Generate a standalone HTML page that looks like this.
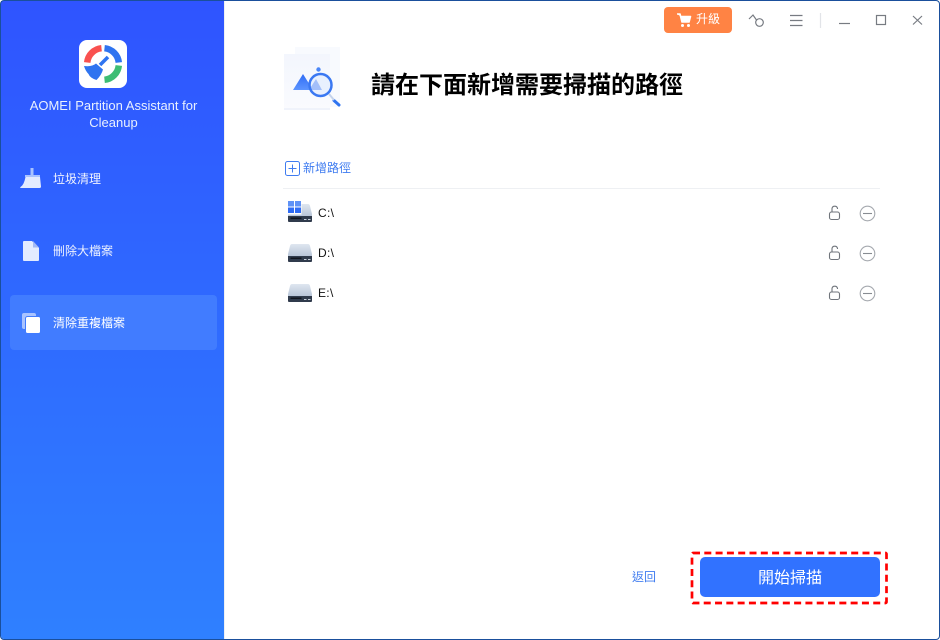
<!DOCTYPE html>
<html><head><meta charset="utf-8">
<style>
html,body{margin:0;padding:0;background:#fff}
body{width:940px;height:640px;position:relative;overflow:hidden;font-family:"Liberation Sans","Noto Sans CJK TC",sans-serif}
.a{position:absolute;white-space:nowrap}
#side{position:absolute;left:1px;top:1px;width:223px;height:638px;background:linear-gradient(180deg,#2f54ff 0%,#2f80ff 100%);border-bottom-left-radius:3px}
#fr{position:absolute;left:0;top:0;width:940px;height:640px;box-sizing:border-box;border:1px solid #1a4f9c;border-radius:4px;z-index:5;pointer-events:none}
.nav{color:#fff;font-size:12px;line-height:16px;opacity:.92}
</style></head><body>
<div id="side"></div>
<div class="a" style="left:224px;top:1px;width:1px;height:638px;background:#eef0f3"></div>
<div id="fr"></div>

<svg class="a" style="left:79px;top:40px" width="48" height="48" viewBox="79 40 48 48">
<rect x="79" y="40" width="48" height="48" rx="8" fill="#fff"/>
<g fill="none" stroke-width="6.5">
<path d="M87.200 62.500A16 16 0 0 1 101.500 48.200" stroke="#f9514f"/>
<path d="M104.500 48.200A16 16 0 0 1 118.800 62.500" stroke="#2f74f0"/>
<path d="M118.800 65.500A16 16 0 0 1 104.500 79.800" stroke="#3dbd74"/>
</g>
<path d="M100 65L108 57" stroke="#2f74f0" stroke-width="3.500" fill="none"/>
<path d="M84 66Q92 67 96 63.500L103 69.500Q101.500 75 96.500 80Q90 78 88.500 74Q85.500 71 84 66Z" fill="#2f74f0"/>
</svg>
<div class="a" style="left:2px;top:97px;width:223px;text-align:center;color:#e8f0ff;font-size:13px;line-height:17px;white-space:normal">AOMEI Partition Assistant for<br>Cleanup</div>

<svg class="a" style="left:20px;top:167px" width="22" height="22" viewBox="0 0 22 22">
<rect x="10.500" y="1" width="3" height="7" fill="#a9c3ff"/>
<rect x="5" y="8" width="15" height="2" fill="#a9c3ff"/>
<path d="M5.500 10H20L21 19.500Q21 21 19.500 21H1Q-.5 21 .5 20Q4 18 5.500 10Z" fill="#e3ebff"/>
</svg>
<div class="a nav" style="left:53px;top:171px">垃圾清理</div>

<svg class="a" style="left:22px;top:240px" width="18" height="22" viewBox="0 0 18 22">
<path d="M2 1H10L17 8V20Q17 21 16 21H2Q1 21 1 20V2Q1 1 2 1Z" fill="#e3ebff"/>
<path d="M11 1L17 7.500H11Z" fill="#a3b9f5"/>
</svg>
<div class="a nav" style="left:53px;top:243px">刪除大檔案</div>

<div class="a" style="left:10px;top:295px;width:207px;height:55px;background:#417cff;border-radius:4px"></div>
<svg class="a" style="left:21px;top:312px" width="22" height="22" viewBox="0 0 22 22">
<rect x="1" y="1" width="14" height="16" rx="2" fill="#a9c3ff"/>
<rect x="4.500" y="4.500" width="15" height="17" rx="2" fill="#fff" stroke="#417cff" stroke-width="1"/>
</svg>
<div class="a nav" style="left:53px;top:315px;opacity:1">清除重複檔案</div>

<div class="a" style="left:664px;top:7px;width:68px;height:26px;background:#ff8344;border-radius:4px"></div>
<svg class="a" style="left:676px;top:12px" width="16" height="16" viewBox="0 0 16 16">
<path d="M1 2H4L6 10H13L14.500 4.500H5" fill="#fff" stroke="#fff" stroke-width="1.600" stroke-linejoin="round"/>
<circle cx="6.500" cy="13.500" r="1.500" fill="#fff"/><circle cx="12.500" cy="13.500" r="1.500" fill="#fff"/>
</svg>
<div class="a" style="left:696px;top:12px;color:#fff;font-size:12px;line-height:15px">升級</div>

<svg class="a" style="left:745px;top:8px" width="185" height="24" viewBox="745 8 185 24" fill="none" stroke="#777b82" stroke-width="1.200">
<circle cx="759.500" cy="22.500" r="3.800"/>
<path d="M749 19L753 15L756.500 20"/>
<path d="M790 15.500H802.500M790 20.500H802.500M790 25.500H802.500"/>
<path d="M820.500 13V28" stroke="#e2e4e8"/>
<path d="M839 23.500H850"/>
<rect x="876.500" y="15.500" width="9" height="9"/>
<path d="M913 16L922 24.500M922 16L913 24.500"/>
</svg>

<svg class="a" style="left:280px;top:44px" width="66" height="70" viewBox="280 44 66 70">
<defs>
<linearGradient id="p" x1="0" y1="0" x2="0" y2="1"><stop offset="0" stop-color="#f3f6fd"/><stop offset="1" stop-color="#fafbfe"/></linearGradient>
<linearGradient id="m" x1="0" y1="0" x2="0" y2="1"><stop offset="0" stop-color="#2f6cf5"/><stop offset="1" stop-color="#5d95ff"/></linearGradient>
</defs>
<rect x="295" y="47" width="45" height="60" fill="#f8fafe"/>
<rect x="284" y="54" width="46" height="56" fill="url(#p)"/>
<rect x="284" y="108" width="46" height="2" fill="#f0f3fb"/>
<path d="M293 90L303 74L313 90Z" fill="url(#m)"/>
<path d="M309 90L316 79L322 90Z" fill="#5d8cf5"/>
<circle cx="320.500" cy="85" r="11" fill="#dce9fd" fill-opacity=".55" stroke="#3a78f2" stroke-width="2.500"/>
<circle cx="318.500" cy="69.500" r="2.200" fill="#4a86f8"/>
<path d="M334 100.500L339 105" stroke="#2f74f0" stroke-width="3" stroke-linecap="round"/>
<path d="M329 94L334 100" stroke="#c4d3ec" stroke-width="2"/>
</svg>
<div class="a" style="left:371px;top:71px;color:#000;font-size:24px;line-height:30px;font-weight:700">請在下面新增需要掃描的路徑</div>

<svg class="a" style="left:285px;top:161px" width="16" height="16" viewBox="0 0 16 16" fill="none" stroke="#3f7cf0" stroke-width="1">
<rect x=".500" y=".500" width="14" height="14" rx="2"/><path d="M7.500 3.500V11.500M3.500 7.500H11.500"/>
</svg>
<div class="a" style="left:303px;top:160px;color:#3f7cf0;font-size:12px;line-height:16px">新增路徑</div>
<div class="a" style="left:283px;top:188px;width:597px;height:1px;background:#eef0f3"></div>

<svg class="a" style="left:287px;top:200px" width="26" height="110" viewBox="0 0 26 110">
<defs>
<linearGradient id="d" x1="0" y1="0" x2="0" y2="1"><stop offset="0" stop-color="#dfe6f0"/><stop offset="1" stop-color="#b9c6d8"/></linearGradient>
<g id="dr">
<path d="M5 4H21Q22.500 4 23 6L25 14V16H1V14L3 6Q3.500 4 5 4Z" fill="url(#d)"/>
<path d="M1 16H25V21Q25 22 24 22H2Q1 22 1 21Z" fill="#303b4c"/>
<rect x="3.500" y="17.500" width="11" height="1.500" fill="#10151e"/><rect x="17" y="19" width="2.500" height="1" fill="#c8d0da"/><rect x="21" y="19" width="2.500" height="1" fill="#c8d0da"/>
</g>
</defs>
<use href="#dr"/>
<rect x="0" y="0" width="14.500" height="14.500" fill="#fff"/>
<rect x="1" y="1" width="6" height="5.500" fill="#5f92f6"/><rect x="8" y="1" width="6" height="5.500" fill="#5f92f6"/>
<rect x="1" y="7.500" width="6" height="5.500" fill="#2f6cf5"/><rect x="8" y="7.500" width="6" height="5.500" fill="#2f6cf5"/>
<use href="#dr" y="40"/>
<use href="#dr" y="80"/>
</svg>
<div class="a" style="left:318px;top:205px;color:#111;font-size:12px;line-height:16px;letter-spacing:.3px">C:\</div>
<div class="a" style="left:318px;top:245px;color:#111;font-size:12px;line-height:16px;letter-spacing:.3px">D:\</div>
<div class="a" style="left:318px;top:285px;color:#111;font-size:12px;line-height:16px;letter-spacing:.3px">E:\</div>

<svg class="a" style="left:825px;top:200px" width="52" height="106" viewBox="0 0 52 106" fill="none" stroke="#70757c" stroke-width="1.100">
<g id="r"><rect x="4.500" y="12" width="10" height="7.500" rx="2"/><path d="M7 12V8.500A2.800 2.800 0 0 1 12.500 8.500V9"/>
<circle cx="42.500" cy="13.500" r="7.300" stroke="#a4a8ae"/><path d="M38 13.500H47" stroke="#888c92"/></g>
<use href="#r" y="40"/><use href="#r" y="80"/>
</svg>

<div class="a" style="left:632px;top:569px;color:#3f7cf0;font-size:12px;line-height:16px">返回</div>
<svg class="a" style="left:689px;top:550px" width="200" height="56" viewBox="0 0 200 56">
<rect x="3" y="3" width="194.500" height="50" rx="1" fill="none" stroke="#f00" stroke-width="2.700" stroke-dasharray="7 4.300"/>
</svg>
<div class="a" style="left:700px;top:557px;width:180px;height:40px;background:#3172ff;border-radius:5px;color:#fff;font-size:16px;line-height:43px;text-align:center">開始掃描</div>
</body></html>
